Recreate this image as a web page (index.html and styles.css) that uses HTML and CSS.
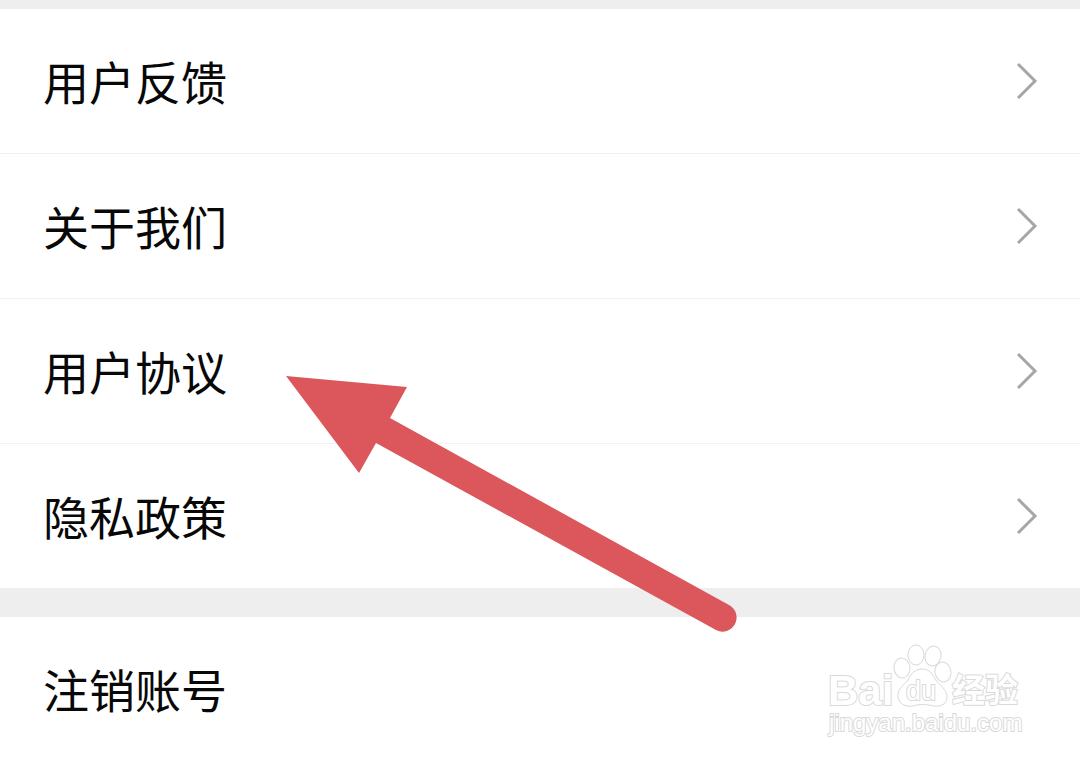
FILE: index.html
```html
<!DOCTYPE html>
<html lang="zh-CN">
  <head>
    <meta charset="UTF-8" />
    <meta name="viewport" content="width=device-width, initial-scale=1.0" />
    <title>设置</title>
    <link rel="stylesheet" href="styles.css">
  </head>
  <body>
    <div class="settings">
      <nav class="group">
        <a class="item" href="#feedback">
          <span class="label">用户反馈</span>
          <svg class="chevron" viewBox="0 0 24 40"><path d="M3 3 L20 20 L3 37" /></svg>
        </a>
        <a class="item" href="#about">
          <span class="label">关于我们</span>
          <svg class="chevron" viewBox="0 0 24 40"><path d="M3 3 L20 20 L3 37" /></svg>
        </a>
        <a class="item" href="#agreement">
          <span class="label">用户协议</span>
          <svg class="chevron" viewBox="0 0 24 40"><path d="M3 3 L20 20 L3 37" /></svg>
        </a>
        <a class="item" href="#privacy">
          <span class="label">隐私政策</span>
          <svg class="chevron" viewBox="0 0 24 40"><path d="M3 3 L20 20 L3 37" /></svg>
        </a>
      </nav>
      <nav class="group">
        <a class="item" href="#cancel">
          <span class="label">注销账号</span>
        </a>
      </nav>
    </div>

    <svg class="arrow" viewBox="0 0 460 264">
      <path d="M0 6 L121 17 L104 48 L443 235 A14 14 0 0 1 430 260 L90 73 L73 103 Z" />
    </svg>

    <svg class="watermark" viewBox="0 0 210 110">
      <text class="brand" x="8" y="70">Bai</text>
      <ellipse cx="82" cy="33" rx="8" ry="10" transform="rotate(-6 82 33)" />
      <ellipse cx="96" cy="20" rx="8" ry="10" />
      <ellipse cx="113" cy="21" rx="8" ry="10" transform="rotate(12 113 21)" />
      <ellipse cx="123" cy="37" rx="8" ry="10" transform="rotate(-12 123 37)" />
      <path d="M102 34 C95 34 91 39 88 45 C84 50 77 54 78 62 C79 69 85 72 93 71 C99 69 106 69 113 71 C121 72 127 69 127 62 C127 54 119 50 115 44 C112 38 109 34 102 34 Z" />
      <text class="du" x="86" y="65">du</text>
      <text class="name" x="132" y="67">经验</text>
      <text class="url" x="9" y="96">jingyan.baidu.com</text>
    </svg>
  </body>
</html>
```
FILE: styles.css
```css
* {
  margin: 0;
  padding: 0;
  box-sizing: border-box;
  font-family: "Noto Sans CJK SC", sans-serif;
}
body {
  position: relative;
  background-color: white;
  color: #080808;
}
.settings {
  border-top: 9px solid #eeeeee;
}
.group + .group {
  border-top: 29px solid #eeeeee;
}
.item {
  display: flex;
  justify-content: space-between;
  align-items: center;
  height: 145px;
  padding: 0 41px 0 43px;
  border-bottom: 1px solid #f2f2f2;
  color: inherit;
  font-size: 46px;
  line-height: 68px;
  text-decoration: none;
}
.item:last-child {
  height: 144px;
  border-bottom: none;
}
.label {
  padding-bottom: 2px;
}
.chevron {
  width: 24px;
  height: 40px;
  fill: none;
  stroke: #a6a6a6;
  stroke-width: 3;
}
.arrow {
  position: absolute;
  top: 370px;
  left: 286px;
  width: 460px;
  height: 264px;
  fill: #db575c;
  pointer-events: none;
}
.watermark {
  position: absolute;
  top: 635px;
  right: 50px;
  width: 210px;
  height: 110px;
  fill: white;
  stroke: #d9d9d9;
  stroke-width: 1;
  pointer-events: none;
}
.watermark text {
  paint-order: stroke;
  stroke-width: 2;
}
.watermark .brand {
  font-family: "Liberation Sans", sans-serif;
  font-size: 42px;
  font-weight: bold;
}
.watermark .du {
  font-family: "Liberation Sans", sans-serif;
  font-size: 27px;
}
.watermark .name {
  font-size: 33px;
  font-weight: bold;
}
.watermark .url {
  font-family: "Liberation Sans", sans-serif;
  font-size: 24px;
}
```
